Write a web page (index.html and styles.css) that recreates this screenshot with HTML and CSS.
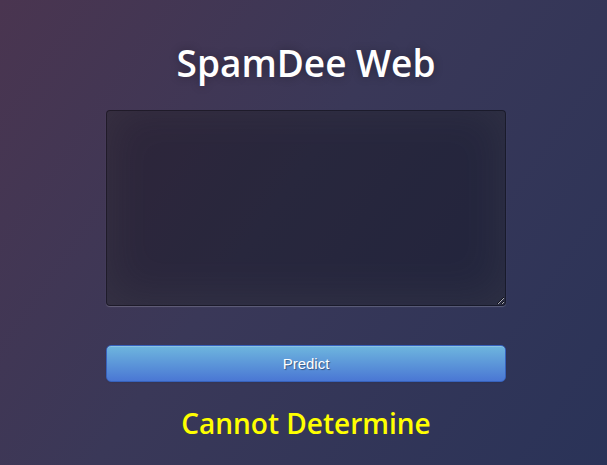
FILE: index.html
```html
<!DOCTYPE html>
<html>
<head>
<meta charset="utf-8">
<title>SpamDee Web</title>
<link rel="stylesheet" href="styles.css">
</head>
<body>
<main class="login">
  <h1 class="title">SpamDee Web</h1>
  <form class="form">
    <textarea class="message" name="message"></textarea>
    <button type="button" class="btn-predict">Predict</button>
  </form>
  <p class="result">Cannot Determine</p>
</main>
</body>
</html>
```

FILE: styles.css
```css
html, body {
  margin: 0;
  height: 100%;
}
body {
  font-family: "Open Sans", "DejaVu Sans", sans-serif;
  background: linear-gradient(125deg, #4a3550 0%, #3a3858 45%, #2a3358 100%);
  overflow: hidden;
}
.login {
  width: 400px;
  margin: 0 auto;
  padding-left: 5px;
  display: flex;
  flex-direction: column;
}
.title {
  margin: 0;
  padding-top: 38px;
  font-size: 37px;
  font-weight: 600;
  line-height: 50px;
  color: #fff;
  text-align: center;
  text-shadow: 0 0 10px rgba(0,0,0,0.3);
}
.form {
  margin-top: 22px;
  display: flex;
  flex-direction: column;
}
.message {
  box-sizing: border-box;
  width: 400px;
  height: 196px;
  margin: 0;
  padding: 10px;
  background: rgba(0,0,0,0.3);
  border: 1px solid rgba(0,0,0,0.3);
  border-radius: 4px;
  box-shadow: inset 0 -5px 45px rgba(100,100,100,0.2), 0 1px 1px rgba(255,255,255,0.2);
  color: #fff;
  font-family: "Open Sans", sans-serif;
  font-size: 13px;
  outline: none;
}
.btn-predict {
  box-sizing: border-box;
  margin-top: 39px;
  width: 400px;
  height: 37px;
  border: 1px solid #3762bc;
  border-radius: 5px;
  background: linear-gradient(to bottom, #6eb6de, #4a77d4);
  color: #fff;
  font-family: "Liberation Sans", Arial, sans-serif;
  font-size: 15px;
  text-shadow: 1px 1px 1px rgba(0,0,0,0.4);
  box-shadow: inset 0 1px 0 rgba(255,255,255,0.2), 0 1px 2px rgba(0,0,0,0.05);
  cursor: pointer;
}
.result {
  margin: 23px 0 0;
  font-size: 28px;
  font-weight: 600;
  line-height: 36px;
  color: #ffff00;
  text-align: center;
}
```
